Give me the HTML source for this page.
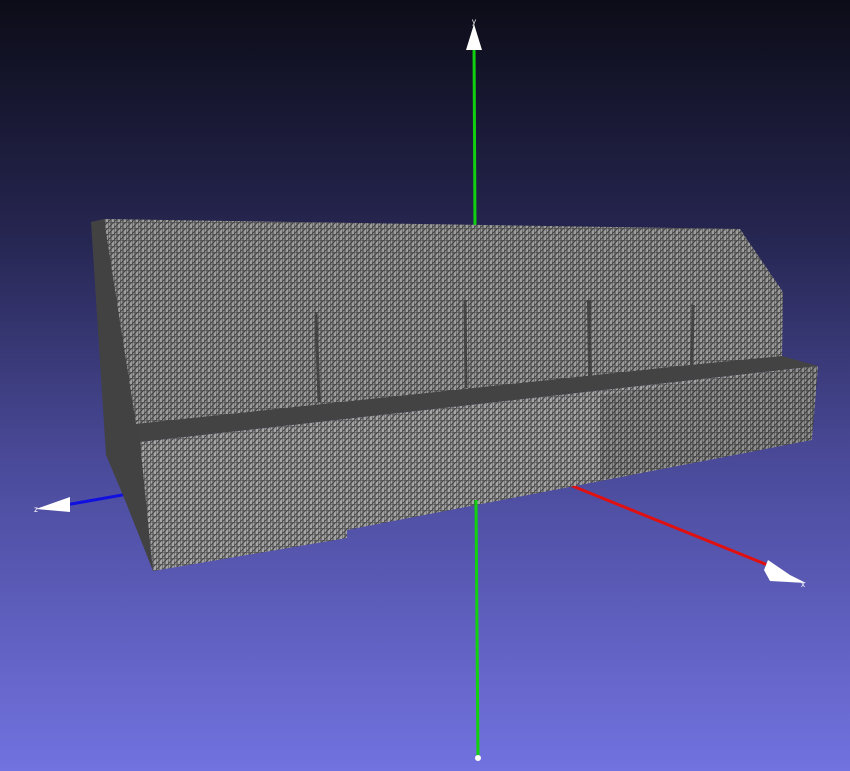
<!DOCTYPE html>
<html><head><style>html,body{margin:0;padding:0;width:850px;height:771px;overflow:hidden}</style></head>
<body>
<svg width="850" height="771" viewBox="0 0 850 771" xmlns="http://www.w3.org/2000/svg">
<defs>
<linearGradient id="bg" x1="0" y1="0" x2="0" y2="1">
<stop offset="0" stop-color="#0c0c18"/>
<stop offset="0.3" stop-color="#252550"/>
<stop offset="0.6" stop-color="#4a4a9a"/>
<stop offset="1" stop-color="#7272e0"/>
</linearGradient>
<pattern id="mesh" width="6" height="6" patternUnits="userSpaceOnUse">
<rect width="6" height="6" fill="#a6a6a6"/>
<path d="M0 0H6M0 0V6M0 6L6 0M3 0V6" stroke="#454545" stroke-width="1" fill="none"/>
</pattern>
<pattern id="mesh2" width="4" height="4" patternUnits="userSpaceOnUse">
<rect width="4" height="4" fill="#4a4a4a"/>
<rect x="1" y="1" width="2" height="1" fill="#a8a8a8"/>
<rect x="0" y="3" width="1" height="1" fill="#a8a8a8"/>
</pattern>
</defs>
<rect width="850" height="771" fill="url(#bg)"/>
<!-- green axis behind -->
<line x1="474" y1="40" x2="475" y2="230" stroke="#10d010" stroke-width="3"/>
<!-- blue axis -->
<line x1="60" y1="506" x2="128" y2="494" stroke="#1010e0" stroke-width="3"/>
<polygon points="36,509 70,497 70,512" fill="#fff"/>
<!-- red axis -->
<line x1="570" y1="485" x2="770" y2="566" stroke="#e01010" stroke-width="3"/>
<polygon points="768,560 790,575 806,583 770,581 764,570" fill="#fff"/>
<text x="801" y="587" font-family="Liberation Sans, sans-serif" font-size="8" fill="#fff">x</text>
<!-- left dark side -->
<polygon points="91,222 104,219 140,425 140,440 153,571 125,500 106,455" fill="#424242"/>
<!-- upper face -->
<polygon points="104,219 740,229 783,292 782,358 136,424" fill="url(#mesh)"/>
<polygon points="104,219 740,229 783,292 782,358 136,424" fill="#000" opacity="0.05"/>
<!-- vertical grooves -->
<line x1="316" y1="312" x2="319" y2="402" stroke="#444" stroke-width="3"/>
<line x1="465" y1="300" x2="466" y2="388" stroke="#444" stroke-width="3"/>
<line x1="589" y1="300" x2="590" y2="377" stroke="#444" stroke-width="4"/>
<line x1="693" y1="305" x2="692" y2="366" stroke="#444" stroke-width="3"/>
<!-- ledge -->
<polygon points="136,424 690,365 782,356 818,366 140,442" fill="#434343"/>
<!-- lower front face -->
<polygon points="140,442 818,366 812,440 347,530 347,538 153,571" fill="url(#mesh)"/>
<polygon points="600,395 818,366 812,440 600,480" fill="#000" opacity="0.12"/>
<!-- green axis front -->
<line x1="476" y1="500" x2="478" y2="758" stroke="#10d010" stroke-width="3"/>
<circle cx="478" cy="758" r="3" fill="#fff"/>
<!-- y arrow -->
<polygon points="474,24 466,50 482,50" fill="#fff"/>
<text x="472" y="24" font-family="Liberation Sans, sans-serif" font-size="8" fill="#fff">y</text>
<text x="34" y="512" font-family="Liberation Sans, sans-serif" font-size="8" fill="#fff">z</text>
</svg>
</body></html>
